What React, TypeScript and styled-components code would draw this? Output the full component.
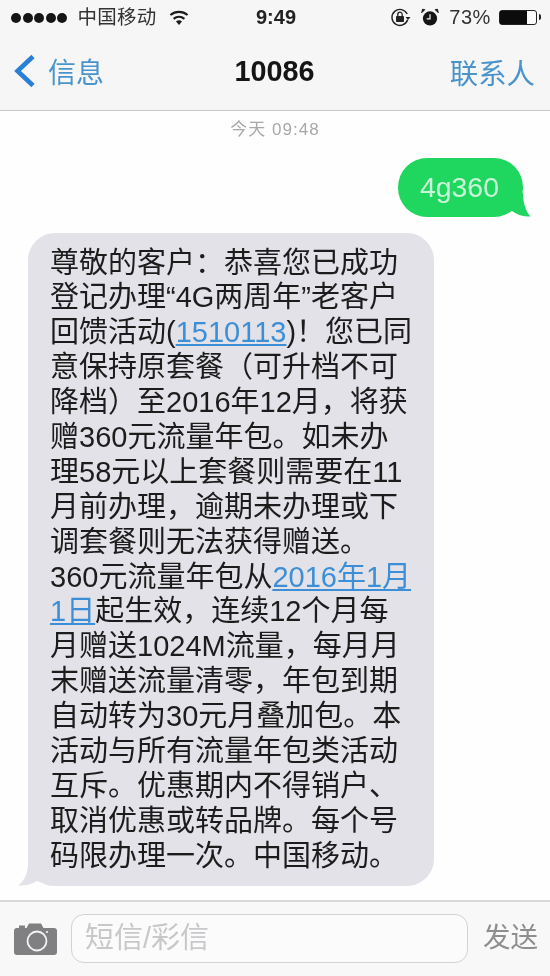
import React from 'react';
import styled, { createGlobalStyle } from 'styled-components';

const SANS = '"Liberation Sans", "Noto Sans CJK SC", sans-serif';

const GlobalStyle = createGlobalStyle`
  html, body {
    margin: 0;
    padding: 0;
    background: #ffffff;
  }
`;

const Screen = styled.div`
  width: 550px;
  height: 976px;
  display: flex;
  flex-direction: column;
  overflow: hidden;
  font-family: ${SANS};
  background: #fefefe;
  filter: blur(0.45px);
`;

const Header = styled.header`
  height: 110px;
  flex: none;
  background: #f6f6f6;
  border-bottom: 1px solid #c8c8c8;
  display: flex;
  flex-direction: column;
`;

const StatusBar = styled.div`
  height: 35px;
  padding: 0 9px 0 11px;
  display: grid;
  grid-template-columns: 1fr auto 1fr;
  align-items: center;
  color: #1c1c1c;
  font-size: 19px;
`;

const StatusLeft = styled.div`
  display: flex;
  align-items: center;
`;

const StatusRight = styled.div`
  display: flex;
  align-items: center;
  justify-content: flex-end;
`;

const Dots = styled.div`
  display: flex;
  gap: 1.6px;
  margin-right: 10px;
`;

const Dot = styled.span`
  width: 10px;
  height: 10px;
  border-radius: 50%;
  background: #151515;
`;

const Carrier = styled.span`
  font-size: 19.5px;
  line-height: 22px;
  letter-spacing: 0.3px;
  color: #333;
  margin: -2px 12px 0 0;
`;

const Clock = styled.span`
  font-size: 20px;
  font-weight: 700;
  color: #222;
`;

const Percent = styled.span`
  font-size: 20px;
  color: #333;
  letter-spacing: 0.6px;
  margin: 0 8px 0 10px;
`;

const Battery = styled.div`
  width: 38px;
  height: 15px;
  box-sizing: border-box;
  border: 1.5px solid #222;
  border-radius: 3px;
  background: #fafafa;
  margin-right: 4px;
  position: relative;
  &::after {
    content: '';
    position: absolute;
    right: -5px;
    top: 3px;
    width: 2.5px;
    height: 6px;
    border-radius: 0 2px 2px 0;
    background: #222;
  }
`;

const BatteryLevel = styled.div`
  height: 100%;
  background: #0c0c0c;
`;

const NavBar = styled.nav`
  flex: 1;
  display: grid;
  grid-template-columns: 1fr auto 1fr;
  align-items: center;
  padding: 0 15px 3px 14px;
`;

const BackLink = styled.div`
  display: flex;
  align-items: center;
  gap: 13px;
  font-size: 28px;
  color: #4a94cc;
`;

const Title = styled.div`
  font-size: 28.8px;
  font-weight: 700;
  color: #151515;
`;

const ContactLink = styled.div`
  justify-self: end;
  font-size: 28.4px;
  color: #4a94cc;
`;

const Conversation = styled.main`
  flex: 1;
  display: flex;
  flex-direction: column;
  padding: 10px 0 0;
`;

const Timestamp = styled.div`
  text-align: center;
  font-size: 17px;
  line-height: 18px;
  letter-spacing: 1px;
  color: #a8a8a8;
  margin-bottom: 19px;
`;

const SentRow = styled.div`
  display: flex;
  padding-left: 398px;
  margin-bottom: 16px;
`;

const SentBubble = styled.div`
  position: relative;
  width: 125px;
  height: 59px;
  box-sizing: border-box;
  padding-left: 22px;
  border-radius: 29px;
  background: #1fd65f;
  color: #c9f6d8;
  font-size: 28.4px;
  line-height: 59px;
`;

const SentTail = styled.svg`
  position: absolute;
  right: -8px;
  bottom: 0;
  width: 22px;
  height: 24px;
`;

const ReceivedRow = styled.div`
  padding-left: 28px;
`;

const ReceivedBubble = styled.div`
  position: relative;
  width: 406px;
  height: 653px;
  box-sizing: border-box;
  padding: 12.5px 0 0 22px;
  border-radius: 27px;
  background: #e2e2e8;
  color: #1c1c1c;
  font-size: 29px;
  line-height: 34.9px;
  white-space: nowrap;
`;

const ReceivedTail = styled.svg`
  position: absolute;
  left: -10px;
  bottom: 0;
  width: 32px;
  height: 26px;
`;

const Line = styled.div`
  height: 34.9px;
`;

const Link = styled.span`
  color: #3c8fd6;
  text-decoration: underline;
  text-decoration-thickness: 2px;
  text-underline-offset: 2px;
`;

const Footer = styled.footer`
  height: 76px;
  flex: none;
  box-sizing: border-box;
  background: #f8f8f9;
  border-top: 2px solid #d9d9d9;
  padding: 12px 0 0 14px;
  display: flex;
  align-items: flex-start;
`;

const CameraButton = styled.svg`
  flex: none;
  width: 43px;
  height: 32px;
  margin: 9px 14px 0 0;
`;

const InputBox = styled.div`
  flex: none;
  width: 397px;
  height: 49px;
  box-sizing: border-box;
  border: 1.5px solid #d2d2d6;
  border-radius: 13px;
  background: #fbfbfc;
  padding-left: 13px;
  font-size: 29px;
  line-height: 46px;
  color: #c8c8ca;
`;

const SendButton = styled.div`
  flex: none;
  margin-left: 15px;
  font-size: 27.5px;
  line-height: 47px;
  white-space: nowrap;
  color: #8e8e90;
`;

const WifiIcon = () => (
  <svg width="20" height="16" viewBox="0 0 20 16">
    <path d="M10 15l3-3.6c-1.8-1.4-4.2-1.4-6 0z" fill="#1c1c1c" />
    <path d="M4.6 8.8c3.2-2.7 7.6-2.7 10.8 0M1.4 5c5-4.2 12.2-4.2 17.2 0" fill="none" stroke="#1c1c1c" strokeWidth="2.2" />
  </svg>
);

const RotationLockIcon = () => (
  <svg width="21" height="21" viewBox="0 0 21 21" style={{ marginRight: 10 }}>
    <path d="M17.6 12.8A8 8 0 1 1 17.2 7" fill="none" stroke="#222" strokeWidth="1.4" />
    <path d="M15.5 10h5l-2.5 3z" fill="#222" />
    <rect x="6" y="9" width="8" height="6" rx="0.8" fill="#222" />
    <path d="M7.8 9V7.4a2.2 2.2 0 0 1 4.4 0V9" fill="none" stroke="#222" strokeWidth="1.3" />
  </svg>
);

const AlarmIcon = () => (
  <svg width="18" height="19" viewBox="0 0 19 19">
    <circle cx="9.5" cy="10.5" r="7.5" fill="#151515" />
    <path d="M9.5 6v5H6" fill="none" stroke="#f6f6f6" strokeWidth="1.3" />
    <path d="M0.8 4.4L4 1.2 1.6 0.8zM18.2 4.4L15 1.2l2.4-0.4z" fill="#151515" stroke="#151515" strokeWidth="1" />
  </svg>
);

const BackChevron = () => (
  <svg width="21" height="34" viewBox="0 0 21 34">
    <path d="M19 2.5L3.5 17 19 31.5" fill="none" stroke="#2a7fd6" strokeWidth="4.6" />
  </svg>
);

const messageLines: React.ReactNode[] = [
  '尊敬的客户：恭喜您已成功',
  '登记办理“4G两周年”老客户',
  <>回馈活动(<Link>1510113</Link>)！您已同</>,
  '意保持原套餐（可升档不可',
  '降档）至2016年12月，将获',
  '赠360元流量年包。如未办',
  '理58元以上套餐则需要在11',
  '月前办理，逾期未办理或下',
  '调套餐则无法获得赠送。',
  <>360元流量年包从<Link>2016年1月</Link></>,
  <><Link>1日</Link>起生效，连续12个月每</>,
  '月赠送1024M流量，每月月',
  '末赠送流量清零，年包到期',
  '自动转为30元月叠加包。本',
  '活动与所有流量年包类活动',
  '互斥。优惠期内不得销户、',
  '取消优惠或转品牌。每个号',
  '码限办理一次。中国移动。',
];

function App() {
  return (
    <Screen>
      <GlobalStyle />
      <Header>
        <StatusBar>
          <StatusLeft>
            <Dots>
              {[0, 1, 2, 3, 4].map((n) => <Dot key={n} />)}
            </Dots>
            <Carrier>中国移动</Carrier>
            <WifiIcon />
          </StatusLeft>
          <Clock>9:49</Clock>
          <StatusRight>
            <RotationLockIcon />
            <AlarmIcon />
            <Percent>73%</Percent>
            <Battery>
              <BatteryLevel style={{ width: '75%' }} />
            </Battery>
          </StatusRight>
        </StatusBar>
        <NavBar>
          <BackLink>
            <BackChevron />
            信息
          </BackLink>
          <Title>10086</Title>
          <ContactLink>联系人</ContactLink>
        </NavBar>
      </Header>
      <Conversation>
        <Timestamp>今天 09:48</Timestamp>
        <SentRow>
          <SentBubble>
            4g360
            <SentTail viewBox="0 0 22 24">
              <path d="M14 0c0 10 3 19 7.5 23.5C15 24 9 22 3 18L1 0z" fill="#1fd65f" />
            </SentTail>
          </SentBubble>
        </SentRow>
        <ReceivedRow>
          <ReceivedBubble>
            {messageLines.map((line, i) => <Line key={i}>{line}</Line>)}
            <ReceivedTail viewBox="0 0 32 26">
              <path d="M10 0C10.500 10 8 20 0 25.500c7 0.500 13-1 19-4.500 4 1 7 3 13 5V0z" fill="#e2e2e8" />
            </ReceivedTail>
          </ReceivedBubble>
        </ReceivedRow>
      </Conversation>
      <Footer>
        <CameraButton viewBox="0 0 43 32">
          <path d="M3 5h2V2.500h6V5h1.500L15 0.500h12L29.500 5H40a3 3 0 0 1 3 3v21a3 3 0 0 1-3 3H3a3 3 0 0 1-3-3V8a3 3 0 0 1 3-3z" fill="#808082" />
          <circle cx="23" cy="18" r="9.500" fill="none" stroke="#f4f4f4" strokeWidth="1.8" />
          <circle cx="33" cy="9" r="1.100" fill="#f4f4f4" />
        </CameraButton>
        <InputBox>短信/彩信</InputBox>
        <SendButton>发送</SendButton>
      </Footer>
    </Screen>
  );
}

export default App;
